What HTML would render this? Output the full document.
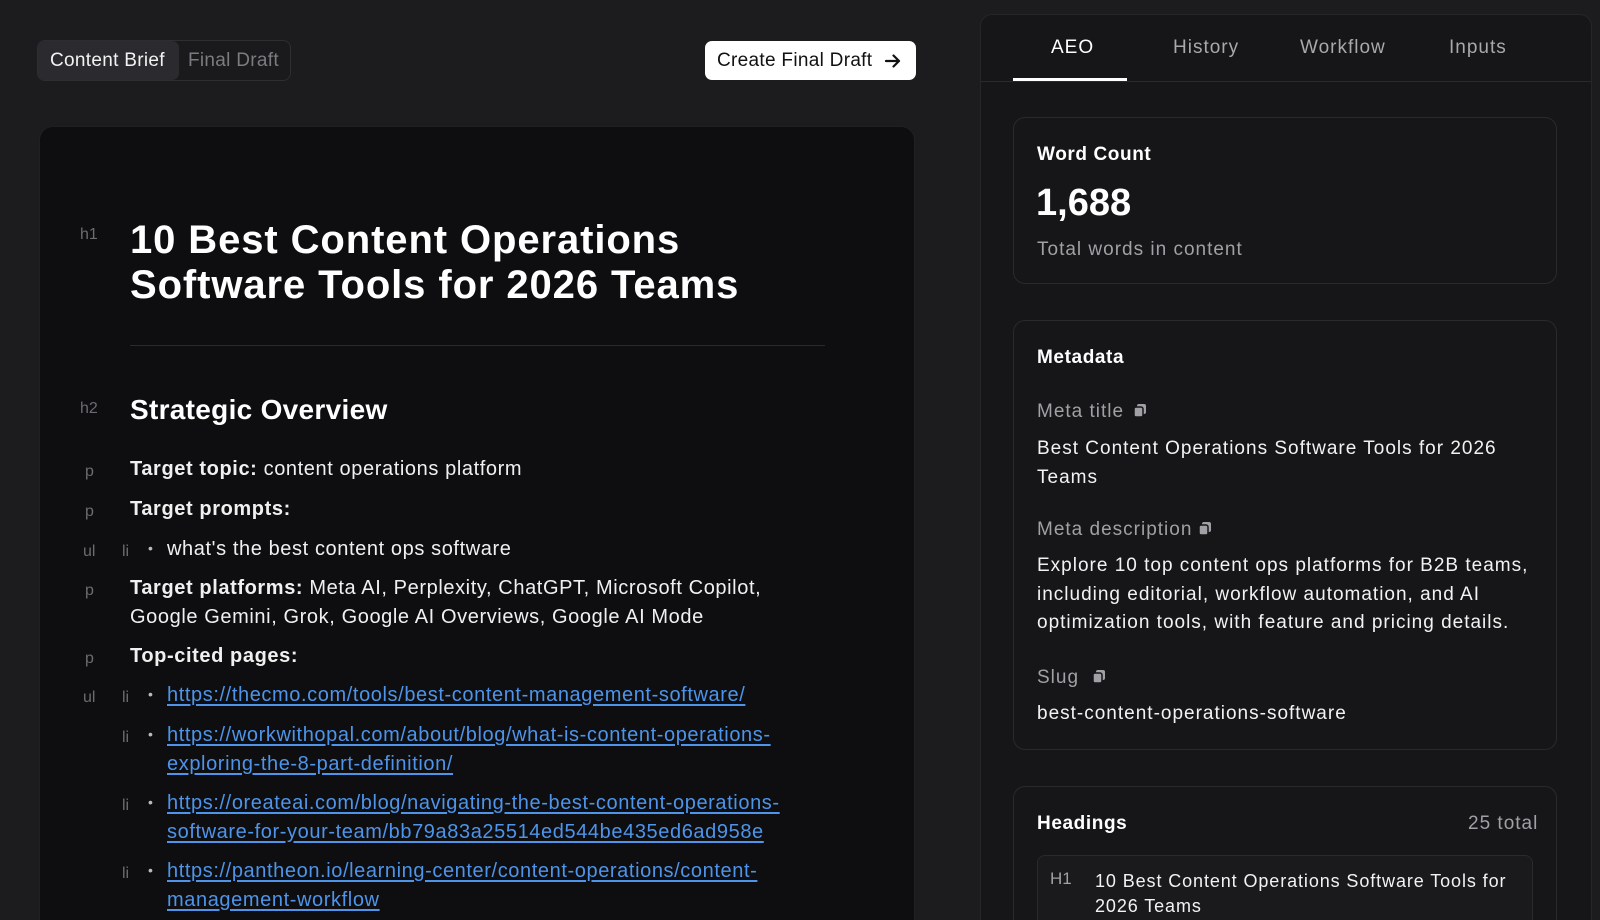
<!DOCTYPE html>
<html><head><meta charset="utf-8"><style>
*{margin:0;padding:0;box-sizing:border-box}
html,body{width:1600px;height:920px;overflow:hidden;background:#1c1c1f;font-family:"Liberation Sans",sans-serif;color:#f2f2f2;position:relative}
.a{position:absolute;white-space:nowrap}
.lbl{color:#6b6b70;font-size:16px}
.t{font-size:20px;line-height:28.5px;color:#f0f0f0;letter-spacing:.6px}
.lk{color:#4d94ea;text-decoration:underline;text-underline-offset:3px}
.dot{font-size:14px;color:#bbb}
.r{font-size:19px;letter-spacing:1px}
.g{color:#a0a0a5}
.card{position:absolute;left:1013px;width:544px;border:1px solid #2a2a2e;border-radius:12px;background:#161618}
</style></head><body>
<div class="a" style="left:37px;top:40px;width:254px;height:41px;border:1px solid #2e2e32;border-radius:8px;background:#1a1a1d"></div>
<div class="a" style="left:38px;top:41px;width:141px;height:39px;border-radius:7px;background:#2b2b2f"></div>
<div class="a" style="left:50px;top:50px;font-size:19px;color:#f2f2f2;letter-spacing:.3px">Content Brief</div>
<div class="a" style="left:188px;top:50px;font-size:19px;color:#7c7c80;letter-spacing:.3px">Final Draft</div>
<div class="a" style="left:705px;top:41px;width:211px;height:39px;border-radius:7px;background:#fff"></div>
<div class="a" style="left:717px;top:50px;font-size:19px;color:#111;letter-spacing:.3px">Create Final Draft</div>
<svg class="a" style="left:883px;top:51px" width="20" height="20" viewBox="0 0 20 20"><path d="M3 10h13M10.5 4.5 16 10l-5.5 5.5" stroke="#111" stroke-width="2.2" fill="none" stroke-linecap="round" stroke-linejoin="round"/></svg>
<div class="a" style="left:39px;top:126px;width:876px;height:794px;background:#0e0e10;border:1px solid #202023;border-bottom:none;border-radius:14px 14px 0 0"></div>
<div class="a lbl" style="left:80px;top:226px">h1</div>
<div class="a" style="left:130px;top:218px;font-size:40px;font-weight:bold;line-height:45px;letter-spacing:.9px;color:#fff">10 Best Content Operations<br>Software Tools for 2026 Teams</div>
<div class="a" style="left:130px;top:345px;width:695px;height:1px;background:#2a2a2e"></div>
<div class="a lbl" style="left:80px;top:400px">h2</div>
<div class="a" style="left:130px;top:394px;font-size:28px;font-weight:bold;color:#fff;letter-spacing:.3px">Strategic Overview</div>

<div class="a lbl" style="left:85px;top:463px">p</div>
<div class="a t" style="left:130px;top:455px"><b>Target topic:</b> content operations platform</div>
<div class="a lbl" style="left:85px;top:503px">p</div>
<div class="a t" style="left:130px;top:495px"><b>Target prompts:</b></div>
<div class="a lbl" style="left:83px;top:543px">ul</div>
<div class="a lbl" style="left:122px;top:543px">li</div>
<div class="a dot" style="left:148px;top:540px">•</div>
<div class="a t" style="left:167px;top:535px">what's the best content ops software</div>
<div class="a lbl" style="left:85px;top:582px">p</div>
<div class="a t" style="left:130px;top:574px"><b>Target platforms:</b> Meta AI, Perplexity, ChatGPT, Microsoft Copilot,<br>Google Gemini, Grok, Google AI Overviews, Google AI Mode</div>
<div class="a lbl" style="left:85px;top:650px">p</div>
<div class="a t" style="left:130px;top:642px"><b>Top-cited pages:</b></div>
<div class="a lbl" style="left:83px;top:689px">ul</div>
<div class="a lbl" style="left:122px;top:689px">li</div>
<div class="a dot" style="left:148px;top:686px">•</div>
<div class="a t lk" style="left:167px;top:681px">https://thecmo.com/tools/best-content-management-software/</div>
<div class="a lbl" style="left:122px;top:729px">li</div>
<div class="a dot" style="left:148px;top:726px">•</div>
<div class="a t lk" style="left:167px;top:721px">https://workwithopal.com/about/blog/what-is-content-operations-<br>exploring-the-8-part-definition/</div>
<div class="a lbl" style="left:122px;top:797px">li</div>
<div class="a dot" style="left:148px;top:794px">•</div>
<div class="a t lk" style="left:167px;top:789px">https://oreateai.com/blog/navigating-the-best-content-operations-<br>software-for-your-team/bb79a83a25514ed544be435ed6ad958e</div>
<div class="a lbl" style="left:122px;top:865px">li</div>
<div class="a dot" style="left:148px;top:862px">•</div>
<div class="a t lk" style="left:167px;top:857px">https://pantheon.io/learning-center/content-operations/content-<br>management-workflow</div>

<div class="a" style="left:980px;top:14px;width:612px;height:906px;background:#161618;border:1px solid #262629;border-bottom:none;border-radius:12px 12px 0 0"></div>
<div class="a" style="left:981px;top:81px;width:610px;height:1px;background:#2a2a2e"></div>
<div class="a r" style="left:1051px;top:37px;color:#fff">AEO</div>
<div class="a r" style="left:1173px;top:37px;color:#a8a8ad">History</div>
<div class="a r" style="left:1300px;top:37px;color:#a8a8ad">Workflow</div>
<div class="a r" style="left:1449px;top:37px;color:#a8a8ad">Inputs</div>
<div class="a" style="left:1013px;top:78px;width:114px;height:3px;background:#fff"></div>

<div class="card" style="top:117px;height:167px"></div>
<div class="a r" style="left:1037px;top:144px;font-weight:bold;color:#fff;letter-spacing:.6px">Word Count</div>
<div class="a" style="left:1036px;top:182px;font-size:38px;font-weight:bold;color:#fff">1,688</div>
<div class="a r g" style="left:1037px;top:239px">Total words in content</div>

<div class="card" style="top:320px;height:430px"></div>
<div class="a r" style="left:1037px;top:347px;font-weight:bold;color:#fff;letter-spacing:.6px">Metadata</div>
<div class="a r g" style="left:1037px;top:401px">Meta title</div>
<svg class="a" style="left:1133px;top:403px" width="15" height="15" viewBox="0 0 15 15"><rect x="4" y="1" width="9" height="10" rx="2" fill="#a0a0a5"/><rect x="1" y="4" width="9" height="10" rx="2" fill="#a0a0a5" stroke="#161618" stroke-width="1.5"/></svg>
<div class="a r" style="left:1037px;top:434px;line-height:29px">Best Content Operations Software Tools for 2026<br>Teams</div>
<div class="a r g" style="left:1037px;top:519px">Meta description</div>
<svg class="a" style="left:1198px;top:521px" width="15" height="15" viewBox="0 0 15 15"><rect x="4" y="1" width="9" height="10" rx="2" fill="#a0a0a5"/><rect x="1" y="4" width="9" height="10" rx="2" fill="#a0a0a5" stroke="#161618" stroke-width="1.5"/></svg>
<div class="a r" style="left:1037px;top:552px;line-height:28.5px">Explore 10 top content ops platforms for B2B teams,<br>including editorial, workflow automation, and AI<br>optimization tools, with feature and pricing details.</div>
<div class="a r g" style="left:1037px;top:667px">Slug</div>
<svg class="a" style="left:1092px;top:669px" width="15" height="15" viewBox="0 0 15 15"><rect x="4" y="1" width="9" height="10" rx="2" fill="#a0a0a5"/><rect x="1" y="4" width="9" height="10" rx="2" fill="#a0a0a5" stroke="#161618" stroke-width="1.5"/></svg>
<div class="a r" style="left:1037px;top:703px">best-content-operations-software</div>

<div class="card" style="top:786px;height:134px;border-bottom:none;border-radius:12px 12px 0 0"></div>
<div class="a r" style="left:1037px;top:813px;font-weight:bold;color:#fff;letter-spacing:.6px">Headings</div>
<div class="a r g" style="left:1468px;top:813px">25 total</div>
<div class="a" style="left:1037px;top:855px;width:496px;height:65px;border:1px solid #2a2a2e;border-bottom:none;border-radius:8px 8px 0 0;background:#1a1a1d"></div>
<div class="a g" style="left:1050px;top:869px;font-size:17px">H1</div>
<div class="a" style="left:1095px;top:869px;font-size:18px;line-height:25px;letter-spacing:.9px">10 Best Content Operations Software Tools for<br>2026 Teams</div>
</body></html>
